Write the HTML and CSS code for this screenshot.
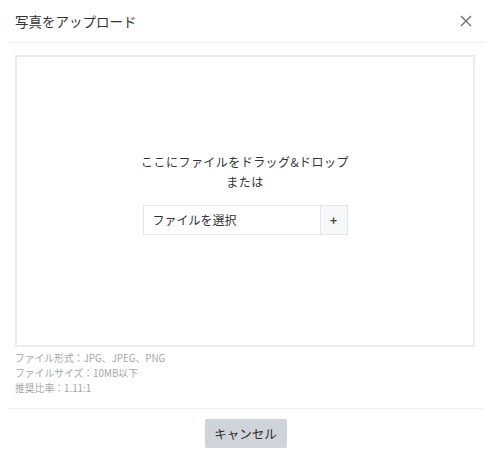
FILE: index.html
```html
<!DOCTYPE html>
<html lang="ja">
<head>
<meta charset="utf-8">
<title>写真をアップロード</title>
<link rel="stylesheet" href="styles.css">
</head>
<body>
<div class="modal">
  <div class="header">
    <h1 class="title">写真をアップロード</h1>
    <button class="close" aria-label="閉じる">
      <svg width="12" height="12" viewBox="0 0 12 12"><path d="M1 1L11 11M11 1L1 11" stroke="#6b6b6b" stroke-width="1.3" fill="none"/></svg>
    </button>
  </div>
  <div class="body">
    <div class="dropzone">
      <p class="drop-text">ここにファイルをドラッグ&amp;ドロップ<br>または</p>
      <div class="picker">
        <span class="picker-label">ファイルを選択</span>
        <span class="picker-btn">+</span>
      </div>
    </div>
    <div class="info">
      <div>ファイル形式：JPG、JPEG、PNG</div>
      <div>ファイルサイズ：10MB以下</div>
      <div>推奨比率：1.11:1</div>
    </div>
  </div>
  <div class="footer">
    <button class="cancel">キャンセル</button>
  </div>
</div>
</body>
</html>
```
FILE: styles.css
```css
* { box-sizing: border-box; }
html, body {
  margin: 0;
  padding: 0;
  background: #fff;
}
body {
  font-family: "Noto Sans CJK JP", "Noto Sans", "Liberation Sans", sans-serif;
  color: #333;
}
.modal {
  width: 493px;
  height: 460px;
  display: flex;
  flex-direction: column;
}
.header {
  height: 43px;
  margin: 0 8px;
  border-bottom: 1px solid #efefef;
  display: flex;
  align-items: center;
  justify-content: space-between;
  padding: 0 13px 0 7px;
}
.title {
  margin: 0;
  font-size: 13.5px;
  font-weight: normal;
  color: #333;
  line-height: 20px;
}
.close {
  border: 0;
  background: none;
  padding: 0;
  width: 12px;
  height: 12px;
  display: flex;
}
.body {
  padding: 12px 18px 0 15px;
}
.dropzone {
  height: 292px;
  border: 2px solid #e9ebee;
  display: flex;
  flex-direction: column;
  align-items: center;
  justify-content: center;
  padding-bottom: 16px;
}
.drop-text {
  margin: 0;
  text-align: center;
  font-size: 12px;
  line-height: 20px;
  letter-spacing: 0.45px;
  color: #333;
}
.picker {
  margin-top: 13px;
  width: 205px;
  height: 30px;
  display: flex;
  border: 1px solid #e3e5e8;
}
.picker-label {
  flex: 1;
  font-size: 12px;
  line-height: 28px;
  padding-left: 9px;
  color: #333;
}
.picker-btn {
  width: 27px;
  border-left: 1px solid #e3e5e8;
  background: #f6f7f8;
  text-align: center;
  font-size: 12px;
  line-height: 28px;
  font-weight: bold;
  color: #444;
}
.info {
  padding-top: 4px;
  font-size: 9.8px;
  line-height: 15px;
  color: #a6a6a6;
}
.footer {
  margin: 12px 10px 0 8px;
  border-top: 1px solid #efefef;
  display: flex;
  justify-content: center;
  padding-top: 10px;
}
.cancel {
  width: 82px;
  height: 29px;
  border: 0;
  border-radius: 2px;
  background: #cfd4db;
  color: #2a2a2a;
  font-family: inherit;
  font-size: 12.5px;
  font-weight: normal;
  padding: 0;
}
```
